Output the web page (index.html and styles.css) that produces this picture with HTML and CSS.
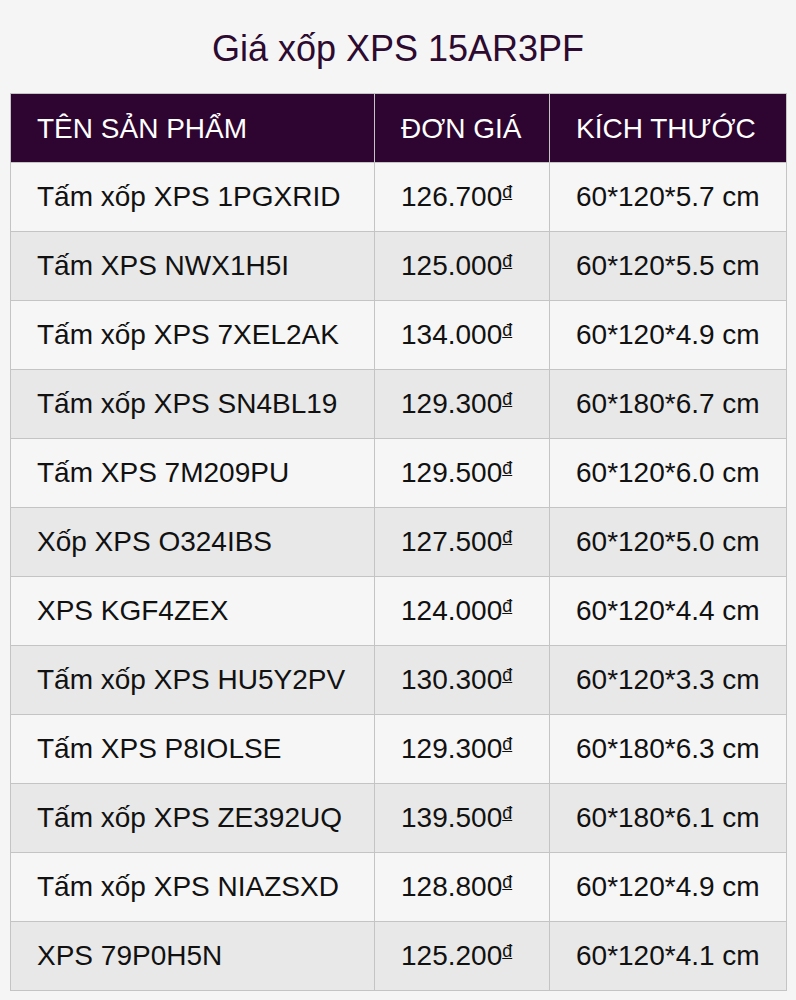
FILE: index.html
```html
<!DOCTYPE html>
<html lang="vi">
<head>
<meta charset="utf-8">
<title>Giá xốp XPS 15AR3PF</title>
<link rel="stylesheet" href="styles.css">
</head>
<body>
<div class="page">
  <h1 class="title">Giá xốp XPS 15AR3PF</h1>
  <table class="price-table">
    <thead>
      <tr><th class="c1">TÊN SẢN PHẨM</th><th class="c2">ĐƠN GIÁ</th><th class="c3">KÍCH THƯỚC</th></tr>
    </thead>
    <tbody>
      <tr><td>Tấm xốp XPS 1PGXRID</td><td>126.700<sup class="cur">đ</sup></td><td>60*120*5.7 cm</td></tr>
      <tr><td>Tấm XPS NWX1H5I</td><td>125.000<sup class="cur">đ</sup></td><td>60*120*5.5 cm</td></tr>
      <tr><td>Tấm xốp XPS 7XEL2AK</td><td>134.000<sup class="cur">đ</sup></td><td>60*120*4.9 cm</td></tr>
      <tr><td>Tấm xốp XPS SN4BL19</td><td>129.300<sup class="cur">đ</sup></td><td>60*180*6.7 cm</td></tr>
      <tr><td>Tấm XPS 7M209PU</td><td>129.500<sup class="cur">đ</sup></td><td>60*120*6.0 cm</td></tr>
      <tr><td>Xốp XPS O324IBS</td><td>127.500<sup class="cur">đ</sup></td><td>60*120*5.0 cm</td></tr>
      <tr><td>XPS KGF4ZEX</td><td>124.000<sup class="cur">đ</sup></td><td>60*120*4.4 cm</td></tr>
      <tr><td>Tấm xốp XPS HU5Y2PV</td><td>130.300<sup class="cur">đ</sup></td><td>60*120*3.3 cm</td></tr>
      <tr><td>Tấm XPS P8IOLSE</td><td>129.300<sup class="cur">đ</sup></td><td>60*180*6.3 cm</td></tr>
      <tr><td>Tấm xốp XPS ZE392UQ</td><td>139.500<sup class="cur">đ</sup></td><td>60*180*6.1 cm</td></tr>
      <tr><td>Tấm xốp XPS NIAZSXD</td><td>128.800<sup class="cur">đ</sup></td><td>60*120*4.9 cm</td></tr>
      <tr><td>XPS 79P0H5N</td><td>125.200<sup class="cur">đ</sup></td><td>60*120*4.1 cm</td></tr>
    </tbody>
  </table>
</div>
</body>
</html>
```
FILE: styles.css
```css
html, body {
  margin: 0;
  padding: 0;
  background: #f5f5f5;
}
body {
  font-family: "Liberation Sans", Arial, sans-serif;
  color: #111;
}
.page {
  padding: 0 10px;
}
.title {
  margin: 0;
  height: 93px;
  line-height: 98px;
  text-align: center;
  font-size: 36px;
  font-weight: normal;
  color: #2d0a2f;
}
.price-table {
  width: 776px;
  border-collapse: collapse;
  table-layout: fixed;
  font-size: 28px;
}
.price-table th,
.price-table td {
  border: 1px solid #c4c4c4;
  height: 69px;
  padding: 0 0 0 26px;
  text-align: left;
  vertical-align: middle;
  font-weight: normal;
  white-space: nowrap;
  box-sizing: border-box;
}
.price-table thead th {
  background: #2e0530;
  color: #fff;
  padding-top: 2px;
}
.price-table .c1 { width: 364px; }
.price-table .c2 { width: 175px; }
.price-table .c3 { width: 237px; }
.price-table tbody tr:nth-child(odd) td { background: #f6f6f6; }
.price-table tbody tr:nth-child(even) td { background: #e8e8e8; }
.cur {
  font-size: 18px;
  text-decoration: underline;
  vertical-align: 8px;
  line-height: 0;
}
```
